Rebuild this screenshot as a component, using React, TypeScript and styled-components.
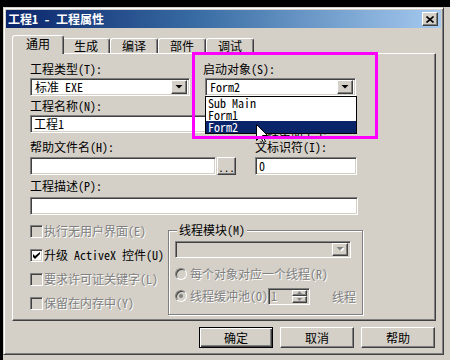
import React from "react";
import styled, { createGlobalStyle, css } from "styled-components";

const FONT = `"Noto Sans Mono CJK SC", "Noto Sans CJK SC", "Liberation Sans", sans-serif`;

const GlobalStyle = createGlobalStyle`
  html, body { margin: 0; padding: 0; background: #d4d0c8; }
  body { font-family: ${FONT}; font-size: 12px; color: #000; }
  * { box-sizing: border-box; }
`;

const raised = css`
  background: #d4d0c8;
  border: 1px solid;
  border-color: #fff #404040 #404040 #fff;
  box-shadow: inset -1px -1px 0 #808080;
`;

const sunken = css`
  border: 1px solid;
  border-color: #808080 #fff #fff #808080;
  box-shadow: inset 1px 1px 0 #404040, inset -1px -1px 0 #d4d0c8;
`;

const disabledText = css`
  color: #808080;
  text-shadow: 1px 1px 0 #fff;
`;

/* ===== frame ===== */
const Screen = styled.div`
  position: relative;
  width: 450px;
  height: 360px;
  overflow: hidden;
  background: #d4d0c8;
  border-top: 7px solid #000;
  border-left: 3px solid #000;
`;

const Dialog = styled.div`
  width: 441px;
  height: 348px;
  display: flex;
  flex-direction: column;
  background: #d4d0c8;
  border: 1px solid;
  border-color: #d4d0c8 #404040 #404040 #d4d0c8;
  box-shadow: inset 1px 1px 0 #fff, inset -1px -1px 0 #808080;
  padding: 2px;
`;

const TitleBar = styled.div`
  height: 18px;
  flex: 0 0 18px;
  display: flex;
  align-items: center;
  justify-content: space-between;
  padding: 0 3px 0 2px;
  background: linear-gradient(to right, #0a246a 0%, #3a6ea5 45%, #a6caf0 100%);
`;

const TitleText = styled.span`
  color: #fff;
  font-weight: bold;
  line-height: 18px;
`;

const CloseButton = styled.div`
  ${raised};
  width: 16px;
  height: 14px;
  display: flex;
  align-items: center;
  justify-content: center;
`;

const Body = styled.div`
  display: flex;
  flex-direction: column;
  padding: 7px 5px 0 6px;
`;

/* ===== tabs ===== */
const TabStrip = styled.div`
  display: flex;
  align-items: flex-end;
  height: 18px;
  padding-left: 2px;
`;

const Tab = styled.div<{ $active?: boolean }>`
  width: 48px;
  height: 15px;
  display: flex;
  align-items: center;
  justify-content: center;
  line-height: 14px;
  background: #d4d0c8;
  border-top: 1px solid #fff;
  border-left: 1px solid #fff;
  border-right: 1px solid #404040;
  border-radius: 3px 3px 0 0;
  box-shadow: inset -1px 0 0 #808080;
  ${(p) =>
    p.$active &&
    css`
      position: relative;
      z-index: 1;
      width: 52px;
      height: 19px;
      margin: 0 -2px -1px -2px;
      padding-bottom: 2px;
    `}
`;

const Panel = styled.div`
  flex: 0 0 268px;
  border: 1px solid;
  border-color: #fff #404040 #404040 #fff;
  box-shadow: inset -1px -1px 0 #808080;
  padding: 8px 0 0 17px;
`;

/* ===== fields ===== */
const Label = styled.div<{ $disabled?: boolean }>`
  line-height: 14px;
  white-space: nowrap;
  ${(p) => p.$disabled && disabledText};
`;

const Field = styled.div<{ $w: number; $overlay?: boolean }>`
  width: ${(p) => p.$w}px;
  display: flex;
  flex-direction: column;
  gap: 2px;
  ${(p) => p.$overlay && "position: relative;"}
`;

const TopRow = styled.div`
  display: flex;
  gap: 15px;
`;

const ComboBox = styled.div<{ $w: number; $h?: number; $disabled?: boolean }>`
  ${sunken};
  position: relative;
  width: ${(p) => p.$w}px;
  height: ${(p) => p.$h ?? 18}px;
  display: flex;
  align-items: center;
  padding: 2px;
  background: ${(p) => (p.$disabled ? "#d4d0c8" : "#fff")};
`;

const ComboText = styled.span`
  flex: 1;
  padding-left: 2px;
  line-height: 12px;
  white-space: nowrap;
`;

const ArrowButton = styled.div<{ $h?: number }>`
  ${raised};
  width: 16px;
  height: ${(p) => p.$h ?? 14}px;
  display: flex;
  align-items: center;
  justify-content: center;
`;

const TextBox = styled.div<{ $w: number; $disabled?: boolean }>`
  ${sunken};
  width: ${(p) => p.$w}px;
  height: 18px;
  padding: 1px 3px;
  line-height: 14px;
  background: ${(p) => (p.$disabled ? "#d4d0c8" : "#fff")};
  white-space: nowrap;
`;

const DotsButton = styled.div`
  ${raised};
  width: 19px;
  height: 18px;
  display: flex;
  align-items: flex-end;
  justify-content: center;
  padding-bottom: 3px;
  line-height: 8px;
  font-size: 11px;
`;

const InputRow = styled.div`
  display: flex;
  gap: 1px;
`;

const MidGrid = styled.div`
  margin-top: 3px;
  display: grid;
  grid-template-columns: 222px 102px;
  column-gap: 3px;
  row-gap: 7px;
`;

const FieldBlock = styled.div<{ $gap?: number }>`
  display: flex;
  flex-direction: column;
  gap: ${(p) => p.$gap ?? 2}px;
`;

const RightCell = styled(FieldBlock)`
  grid-column: 2;
  grid-row: 1 / 3;
  align-self: end;
`;

const DescBlock = styled(FieldBlock)`
  margin-top: 4px;
`;

/* ===== dropdown list ===== */
const DropList = styled.div`
  position: absolute;
  left: 0;
  top: 34px;
  width: 152px;
  background: #fff;
  border: 1px solid #000;
  z-index: 2;
`;

const DropItem = styled.div<{ $selected?: boolean }>`
  height: 12px;
  line-height: 12px;
  padding-left: 2px;
  white-space: nowrap;
  ${(p) => p.$selected && "background: #0a246a; color: #fff;"}
`;

/* ===== bottom section ===== */
const BottomRow = styled.div`
  margin-top: 4px;
  display: flex;
`;

const CheckColumn = styled.div`
  width: 138px;
  display: flex;
  flex-direction: column;
`;

const CheckRow = styled.div`
  height: 24px;
  display: flex;
  align-items: center;
  gap: 1px;
  white-space: nowrap;
`;

const CheckBox = styled.span<{ $disabled?: boolean }>`
  ${sunken};
  width: 13px;
  height: 13px;
  flex: 0 0 13px;
  display: flex;
  align-items: center;
  justify-content: center;
  background: ${(p) => (p.$disabled ? "#d4d0c8" : "#fff")};
`;

const Group = styled.fieldset`
  margin: 4px 0 0 0;
  width: 190px;
  padding: 4px 6px 4px 6px;
  border: 1px solid #808080;
  box-shadow: inset 1px 1px 0 #fff, 1px 1px 0 #fff;
`;

const GroupLegend = styled.legend`
  padding: 0 2px;
  margin-left: 2px;
  line-height: 14px;
  background: #d4d0c8;
`;

const RadioRow = styled.div<{ $first?: boolean }>`
  height: 22px;
  display: flex;
  align-items: center;
  white-space: nowrap;
  ${(p) => p.$first && "margin-top: 5px;"}
`;

const Radio = styled.span`
  width: 12px;
  height: 12px;
  flex: 0 0 12px;
  margin-right: 3px;
  border-radius: 50%;
  border: 1px solid;
  border-color: #808080 #fff #fff #808080;
  box-shadow: inset 1px 1px 0 #404040;
  background: #d4d0c8;
  display: flex;
  align-items: center;
  justify-content: center;
`;

const RadioDot = styled.span`
  width: 4px;
  height: 4px;
  border-radius: 50%;
  background: #808080;
`;

const SpinBox = styled.div`
  ${sunken};
  width: 42px;
  height: 17px;
  display: flex;
  align-items: center;
  padding: 2px;
  background: #d4d0c8;
`;

const SpinText = styled.span`
  flex: 1;
  line-height: 12px;
  ${disabledText};
`;

const SpinButtons = styled.div`
  display: flex;
  flex-direction: column;
  width: 15px;
  height: 13px;
`;

const SpinButton = styled.div`
  ${raised};
  flex: 1;
  display: flex;
  align-items: center;
  justify-content: center;
`;

const ThreadsLabel = styled.span`
  margin-left: 22px;
  ${disabledText};
`;

/* ===== buttons ===== */
const ButtonRow = styled.div`
  margin-top: 6px;
  margin-right: 1px;
  display: flex;
  justify-content: flex-end;
  gap: 7px;
`;

const PushButton = styled.div<{ $default?: boolean }>`
  ${raised};
  width: 74px;
  height: 21px;
  display: flex;
  align-items: center;
  justify-content: center;
  line-height: 14px;
  ${(p) =>
    p.$default &&
    css`
      border-color: #000;
      box-shadow: inset 1px 1px 0 #fff, inset -1px -1px 0 #404040, inset -2px -2px 0 #808080;
    `}
`;

const StartLabel = styled(Label)`
  margin-left: -2px;
`;

/* ===== overlays ===== */
const Highlight = styled.div`
  position: absolute;
  left: 189px;
  top: 45px;
  width: 186px;
  height: 87px;
  border: 3px solid #f0f;
  z-index: 5;
`;

const Cursor = styled.svg`
  position: absolute;
  left: 253px;
  top: 117px;
  z-index: 4;
`;

const DownArrow = ({ disabled }: { disabled?: boolean }) => (
  <svg width="8" height="5" viewBox="0 0 8 5">
    {disabled && <path d="M2 1h7L5.5 4.5z" fill="#fff" />}
    <path d="M0.5 0h7L4 3.5z" fill={disabled ? "#808080" : "#000"} />
  </svg>
);

const SmallArrow = ({ up }: { up?: boolean }) => (
  <svg width="5" height="3" viewBox="0 0 5 3">
    <path d={up ? "M2.5 0L5 3H0z" : "M0 0h5L2.5 3z"} fill="#808080" />
  </svg>
);

const Check = () => (
  <svg width="7" height="7" viewBox="0 0 7 7">
    <path d="M0 2v3l2 2 5-5V-0L2 4z" fill="#000" />
  </svg>
);

const checks = [
  { text: "执行无用户界面(E)", disabled: true },
  { text: "升级 ActiveX 控件(U)", checked: true },
  { text: "要求许可证关键字(L)", disabled: true },
  { text: "保留在内存中(Y)", disabled: true },
];

const tabs = ["通用", "生成", "编译", "部件", "调试"];

export default function App() {
  return (
    <>
      <GlobalStyle />
      <Screen>
        <Dialog>
          <TitleBar>
            <TitleText>工程1 - 工程属性</TitleText>
            <CloseButton>
              <svg width="8" height="7" viewBox="0 0 8 7">
                <path d="M0.5 0.5l7 6M7.5 0.5l-7 6" stroke="#000" strokeWidth="1.6" />
              </svg>
            </CloseButton>
          </TitleBar>

          <Body>
            <TabStrip>
              {tabs.map((t, i) => (
                <Tab key={t} $active={i === 0}>
                  {t}
                </Tab>
              ))}
            </TabStrip>

            <Panel>
              <TopRow>
                <Field $w={160}>
                  <Label>工程类型(T):</Label>
                  <ComboBox $w={160}>
                    <ComboText>标准 EXE</ComboText>
                    <ArrowButton>
                      <DownArrow />
                    </ArrowButton>
                  </ComboBox>
                </Field>
                <Field $w={151} $overlay>
                  <StartLabel>启动对象(S):</StartLabel>
                  <ComboBox $w={151}>
                    <ComboText>Form2</ComboText>
                    <ArrowButton>
                      <DownArrow />
                    </ArrowButton>
                  </ComboBox>
                  <DropList>
                    <DropItem>Sub Main</DropItem>
                    <DropItem>Form1</DropItem>
                    <DropItem $selected>Form2</DropItem>
                  </DropList>
                </Field>
              </TopRow>

              <MidGrid>
                <FieldBlock>
                  <Label>工程名称(N):</Label>
                  <TextBox $w={220}>工程1</TextBox>
                </FieldBlock>
                <FieldBlock $gap={3}>
                  <Label>帮助文件名(H):</Label>
                  <InputRow>
                    <TextBox $w={186} />
                    <DotsButton>...</DotsButton>
                  </InputRow>
                </FieldBlock>
                <RightCell $gap={3}>
                  <Label>
                    工程帮助上下
                    <br />
                    文标识符(I):
                  </Label>
                  <TextBox $w={102}>0</TextBox>
                </RightCell>
              </MidGrid>

              <DescBlock $gap={4}>
                <Label>工程描述(P):</Label>
                <TextBox $w={328} />
              </DescBlock>

              <BottomRow>
                <CheckColumn>
                  {checks.map((c) => (
                    <CheckRow key={c.text}>
                      <CheckBox $disabled={c.disabled}>{c.checked && <Check />}</CheckBox>
                      <Label $disabled={c.disabled}>{c.text}</Label>
                    </CheckRow>
                  ))}
                </CheckColumn>

                <Group>
                  <GroupLegend>线程模块(M)</GroupLegend>
                  <ComboBox $w={176} $h={17} $disabled>
                    <ComboText />
                    <ArrowButton $h={13}>
                      <DownArrow disabled />
                    </ArrowButton>
                  </ComboBox>
                  <RadioRow $first>
                    <Radio />
                    <Label $disabled>每个对象对应一个线程(R)</Label>
                  </RadioRow>
                  <RadioRow>
                    <Radio>
                      <RadioDot />
                    </Radio>
                    <Label $disabled>线程缓冲池(O)</Label>
                    <SpinBox>
                      <SpinText>1</SpinText>
                      <SpinButtons>
                        <SpinButton>
                          <SmallArrow up />
                        </SpinButton>
                        <SpinButton>
                          <SmallArrow />
                        </SpinButton>
                      </SpinButtons>
                    </SpinBox>
                    <ThreadsLabel>线程</ThreadsLabel>
                  </RadioRow>
                </Group>
              </BottomRow>
            </Panel>

            <ButtonRow>
              <PushButton $default>确定</PushButton>
              <PushButton>取消</PushButton>
              <PushButton>帮助</PushButton>
            </ButtonRow>
          </Body>
        </Dialog>

        <Cursor width="12" height="20" viewBox="0 0 12 20">
          <path d="M0.5 0.5V16.5L4.5 12.5L7.5 18.5L9.5 17.5L6.5 11.5H11.5Z" fill="#fff" stroke="#000" />
        </Cursor>
        <Highlight />
      </Screen>
    </>
  );
}
